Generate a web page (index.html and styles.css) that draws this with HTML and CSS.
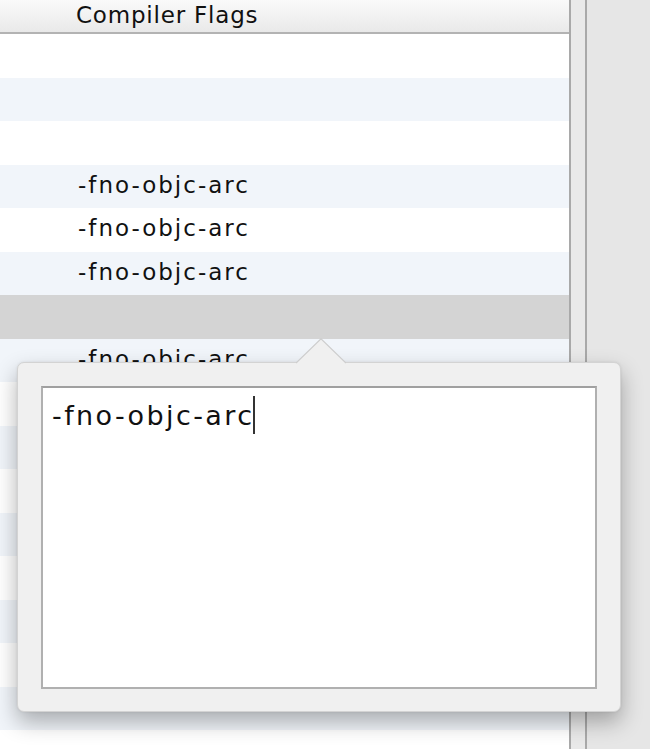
FILE: index.html
```html
<!DOCTYPE html>
<html>
<head>
<meta charset="utf-8">
<link rel="stylesheet" href="styles.css">
</head>
<body>
<div class="window">
  <div class="table">
    <div class="header"><span class="header-title">Compiler Flags</span></div>
    <div class="rows">
      <div class="row"></div>
      <div class="row alt"></div>
      <div class="row"></div>
      <div class="row alt"><span class="cell">-fno-objc-arc</span></div>
      <div class="row"><span class="cell">-fno-objc-arc</span></div>
      <div class="row alt"><span class="cell">-fno-objc-arc</span></div>
      <div class="row selected"></div>
      <div class="row alt"><span class="cell">-fno-objc-arc</span></div>
      <div class="row"></div>
      <div class="row alt"></div>
      <div class="row"></div>
      <div class="row alt"></div>
      <div class="row"></div>
      <div class="row alt"></div>
      <div class="row"></div>
      <div class="row alt"></div>
    </div>
  </div>
  <div class="gutter"></div>
  <div class="side"></div>

  <div class="popover">
    <svg class="arrow" width="50" height="26" viewBox="0 0 50 26">
      <polygon points="0,25.5 25,1 50,25.5" fill="#f0f0f0"/>
      <polyline points="0,25 25,0.8 50,25" fill="none" stroke="#cdcdcd" stroke-width="1.2"/>
    </svg>
    <div class="editor"><span class="editor-text">-fno-objc-arc</span><span class="caret"></span></div>
  </div>
</div>
</body>
</html>
```
FILE: styles.css
```css
html, body {
  margin: 0;
  padding: 0;
  background: #e6e6e6;
}
body {
  font-family: "DejaVu Sans", "Liberation Sans", sans-serif;
  color: #111;
  overflow: hidden;
}
.window {
  position: relative;
  display: flex;
  width: 650px;
  height: 749px;
  overflow: hidden;
}
.table {
  width: 569px;
  flex: none;
  background: #fff;
  border-right: 2px solid #a9a9a9;
  display: flex;
  flex-direction: column;
}
.header {
  height: 32px;
  flex: none;
  background: linear-gradient(#fafafa, #e9e9e9);
  border-bottom: 2px solid #b3b3b3;
  display: flex;
  align-items: center;
  padding-left: 76px;
}
.header-title {
  font-size: 23px;
  letter-spacing: 0.8px;
  line-height: 28px;
  margin-top: -3px;
  color: #111;
}
.rows {
  display: flex;
  flex-direction: column;
}
.row {
  height: 43.5px;
  flex: none;
  background: #fff;
  display: flex;
  align-items: center;
  padding-left: 78px;
  box-sizing: border-box;
}
.row.alt {
  background: #f1f5fa;
}
.row.selected {
  background: #d4d4d4;
}
.cell {
  font-size: 23px;
  letter-spacing: 2px;
  line-height: 28px;
  margin-top: -3px;
  color: #111;
}
.gutter {
  width: 14px;
  flex: none;
  background: #e9e9e9;
  border-right: 2px solid #a9a9a9;
}
.side {
  flex: 1;
  background: #e6e6e6;
}
.popover {
  position: absolute;
  left: 17px;
  top: 362px;
  width: 604px;
  height: 350px;
  box-sizing: border-box;
  background: #f0f0f0;
  border: 1px solid #d3d3d3;
  border-radius: 7px;
  box-shadow: 0 10px 22px rgba(0, 0, 0, 0.3), 0 0 3px rgba(0, 0, 0, 0.08);
  padding: 23px 23px 22px 23px;
  display: flex;
}
.arrow {
  position: absolute;
  left: 278px;
  top: -25px;
}
.editor {
  flex: 1;
  background: #fff;
  border: 2px solid #b0b0b0;
  border-top-color: #a0a0a0;
  padding: 8px 0 0 9px;
  display: flex;
  align-items: flex-start;
}
.editor-text {
  font-size: 27px;
  letter-spacing: 2.4px;
  line-height: 40px;
  color: #111;
}
.caret {
  width: 2px;
  height: 38px;
  margin-left: -1px;
  background: #333;
}
```
